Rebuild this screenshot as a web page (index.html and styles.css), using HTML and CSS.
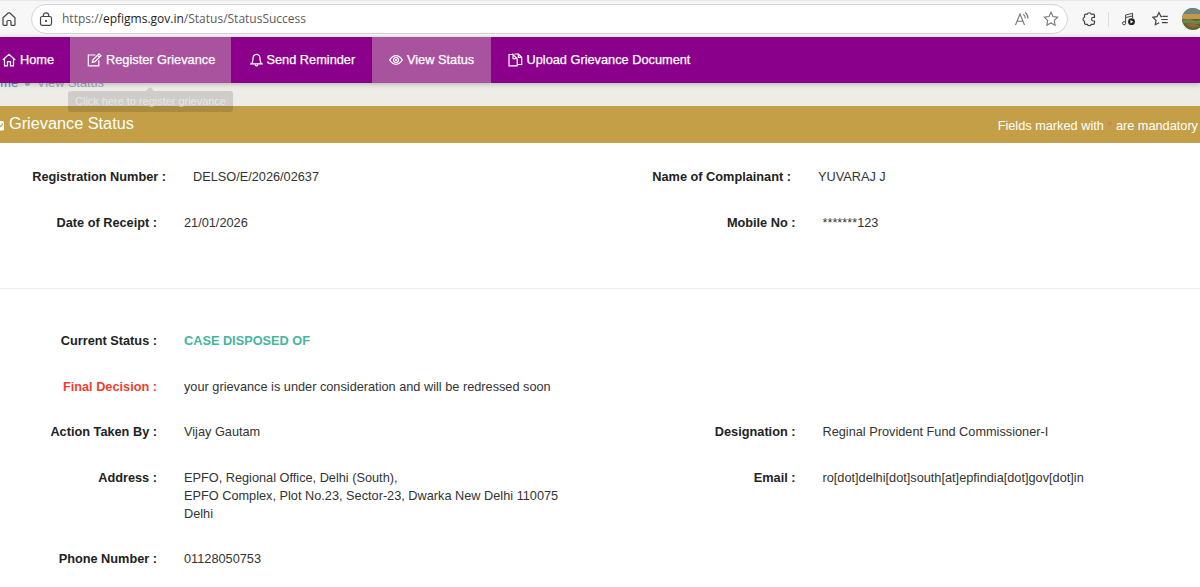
FILE: index.html
```html
<!DOCTYPE html>
<html lang="en">
<head>
	<meta charset="utf-8">
	<title>Grievance Status</title>
	<link rel="stylesheet" href="styles.css">
</head>
<body>

	<!-- Browser toolbar -->
	<div class="toolbar">
		<svg class="tool-home" width="16" height="16" viewBox="0 0 16 16"><path d="M2 6.8 L7.2 2 Q8 1.3 8.8 2 L14 6.8 V13.5 Q14 14.4 13.1 14.4 H10.7 Q10 14.4 10 13.7 V10.5 Q10 9.5 9 9.5 H7 Q6 9.5 6 10.5 V13.7 Q6 14.4 5.3 14.4 H2.9 Q2 14.4 2 13.5 Z"/></svg>
		<div class="address-bar">
			<svg class="lock" width="14" height="15" viewBox="0 0 14 15"><rect x="1.5" y="4.5" width="11" height="8.8" rx="1.8"/><path d="M4.3 4.5 V3.6 a2.7 2.7 0 0 1 5.4 0 V4.5"/><circle class="dot" cx="7" cy="9" r="1"/></svg>
			<span class="url">https://<b>epfigms.gov.in</b>/Status/StatusSuccess</span>
			<svg class="read" width="16" height="16" viewBox="0 0 16 16"><path d="M1.5 14 L6 3 L10.5 14 M3 10.3 H9 M9.3 3.2 Q11.3 4.6 11.3 7.5 M11.2 1.5 Q14 3.6 14 7.5"/></svg>
			<svg class="star" width="16" height="16" viewBox="0 0 16 16"><path d="M8 1.3 L10 5.6 L14.7 6.2 L11.3 9.4 L12.1 14.2 L8 11.9 L3.9 14.2 L4.7 9.4 L1.3 6.2 L6 5.6 Z"/></svg>
		</div>
		<svg class="puzzle" width="16" height="16" viewBox="0 0 16 16"><path d="M4.8 3.2 H6.3 A2.1 2.1 0 0 1 10.3 3.2 H12.2 Q13.5 3.2 13.5 4.5 V6.4 H12.4 A1.8 1.8 0 0 0 12.4 10 H13.5 V12 Q13.5 13.3 12.2 13.3 H10.3 A2.1 2.1 0 0 1 6.3 13.3 H4.8 Q3.5 13.3 3.5 12 V10.2 A2.1 2.1 0 0 1 3.5 6.2 V4.5 Q3.5 3.2 4.8 3.2 Z"/></svg>
		<span class="separator"></span>
		<svg class="music" width="16" height="16" viewBox="0 0 16 16"><path d="M4.6 12 V4 L11.6 2.3 V7 M4.6 6.6 L11.6 4.9"/><circle cx="3.1" cy="12.2" r="1.6"/><circle class="disc" cx="10.5" cy="10.7" r="3.4"/><path class="play" d="M9.5 9 L12.2 10.7 L9.5 12.4 Z"/></svg>
		<svg class="favorites" width="17" height="16" viewBox="0 0 17 16"><path d="M10 5.6 L9 5.6 L7 1.6 L5 5.6 L1 6.3 L4 9.4 L3.3 13.8 L7.2 11.8 M10.3 5.3 H15.8 M9.2 8.5 H15.8 M9.9 11.7 H15.8"/></svg>
		<svg class="avatar" width="22" height="22" viewBox="0 0 22 22">
			<defs><clipPath id="round"><circle cx="11" cy="11" r="11"/></clipPath></defs>
			<g clip-path="url(#round)">
				<rect width="22" height="22" fill="#52652f"/>
				<rect width="22" height="6" fill="#6c8580"/>
				<rect y="6" width="22" height="5" fill="#c5974c"/>
				<path d="M0 12 L7 11 L14 13 L22 11 V15 L12 16 L0 15Z" fill="#6d8746"/>
				<path d="M3 17 L10 15 L18 18 L11 20Z" fill="#9a6537"/>
			</g>
		</svg>
	</div>

	<!-- Main menu -->
	<div class="menu">
		<a class="item home"><svg width="14" height="14" viewBox="0 0 14 14"><path d="M.8 7 L7 1.2 L13.2 7 M2.5 5.6 V12.8 H5.5 V8.7 H8.5 V12.8 H11.5 V5.6"/></svg>Home</a>
		<a class="item register active"><svg width="15" height="14" viewBox="0 0 15 14"><path d="M8.5 2 H1.3 V12.8 H11.8 V7.3 M5.3 9.3 L6 6.7 L12 .9 L14 2.8 L8 8.6 Z M10.6 2.3 L12.5 4.2"/></svg>Register Grievance</a>
		<a class="item reminder"><svg width="13" height="14" viewBox="0 0 13 14"><path d="M1 10.8 Q3 9.6 3 5.2 A3.5 3.8 0 0 1 10 5.2 Q10 9.6 12 10.8 Z M5.2 11.2 Q5.2 12.8 6.5 12.8 Q7.8 12.8 7.8 11.2"/></svg>Send Reminder</a>
		<a class="item view active"><svg width="14" height="14" viewBox="0 0 14 14"><path d="M.7 7 Q3.4 2.7 7 2.7 Q10.6 2.7 13.3 7 Q10.6 11.3 7 11.3 Q3.4 11.3 .7 7 Z"/><circle cx="7" cy="7" r="2.5"/><circle cx="7" cy="7" r=".5"/></svg>View Status</a>
		<a class="item upload"><svg width="15" height="14" viewBox="0 0 15 14"><path d="M5 1.5 H1 V12.8 H9.2 V5.7 L5 1.5 V5.7 H9.2 M6.5 1 H10.5 L13.7 4.2 V11.5 H9.2 M10.3 1 V4.4 H13.7"/></svg>Upload Grievance Document</a>
	</div>

	<div class="breadcrumb">
		<div class="crumbs"><span class="crumb-home">Home</span><span class="bullet"></span><span>View Status</span></div>
		<div class="tooltip">Click here to register grievance</div>
	</div>

	<div class="caption">
		<div class="caption-title"><svg width="5" height="10" viewBox="0 0 5 10"><path class="box" d="M0 0 H2.5 Q4 0 4 1.5 V8 Q4 9.5 2.5 9.5 H0Z"/><path class="check" d="M0 6 L3 2.7"/></svg>Grievance Status</div>
		<div class="mandatory">Fields marked with <span class="required">*</span> are mandatory</div>
	</div>

	<div class="section complainant">
		<div class="row top">
			<div class="label">Registration Number :</div>
			<div class="value">DELSO/E/2026/02637</div>
			<div class="label">Name of Complainant :</div>
			<div class="value">YUVARAJ J</div>
		</div>
		<div class="row">
			<div class="label">Date of Receipt :</div>
			<div class="value">21/01/2026</div>
			<div class="label">Mobile No :</div>
			<div class="value">*******123</div>
		</div>
	</div>

	<div class="section">
		<div class="row">
			<div class="label">Current Status :</div>
			<div class="value disposed">CASE DISPOSED OF</div>
		</div>
		<div class="row">
			<div class="label decision">Final Decision :</div>
			<div class="value">your grievance is under consideration and will be redressed soon</div>
		</div>
		<div class="row">
			<div class="label">Action Taken By :</div>
			<div class="value">Vijay Gautam</div>
			<div class="label">Designation :</div>
			<div class="value">Reginal Provident Fund Commissioner-I</div>
		</div>
		<div class="row">
			<div class="label">Address :</div>
			<div class="value">EPFO, Regional Office, Delhi (South),<br>EPFO Complex, Plot No.23, Sector-23, Dwarka New Delhi 110075<br>Delhi</div>
			<div class="label">Email :</div>
			<div class="value">ro[dot]delhi[dot]south[at]epfindia[dot]gov[dot]in</div>
		</div>
		<div class="row">
			<div class="label">Phone Number :</div>
			<div class="value">01128050753</div>
		</div>
	</div>

</body>
</html>
```

FILE: styles.css
```css
* {
	box-sizing: border-box;
}
body {
	margin: 0;
	height: 587px;
	overflow: hidden;
	background-color: #fff;
	font-family: "Liberation Sans", Arial, sans-serif;
	font-size: 12.74px;
	line-height: 18.2px;
	color: #333;
}
svg {
	flex: none;
	fill: none;
	stroke: #444;
	stroke-width: 1.2;
}

/* browser toolbar */
.toolbar {
	display: flex;
	align-items: center;
	height: 37px;
	padding-left: 1px;
	background-color: #f7f7f7;
	border-top: 1px solid #e8e8e8;
	overflow: hidden;
}
.address-bar {
	display: flex;
	flex: none;
	align-items: center;
	width: 1037px;
	height: 30px;
	margin-left: 14px;
	padding-left: 7px;
	background-color: #fff;
	border: 1px solid #d4d4d4;
	border-radius: 15px;
}
.url {
	width: 952px;
	margin-left: 9px;
	font-family: "Open Sans", "Noto Sans", sans-serif;
	font-size: 12px;
	color: #5c5c5c;
	white-space: nowrap;
}
.url b {
	font-weight: normal;
	color: #222;
}
.read, .star {
	stroke: #777;
	stroke-width: 1.1;
}
.star {
	margin-left: 13px;
}
.dot, .disc {
	fill: #222;
	stroke: none;
}
.play {
	fill: #fff;
	stroke: none;
}
.puzzle {
	margin-left: 13px;
}
.separator {
	flex: none;
	width: 1px;
	height: 15px;
	margin-left: 11px;
	background-color: #ddd;
}
.music {
	margin-left: 12px;
	stroke-width: 1;
}
.favorites {
	margin-left: 15px;
}
.avatar {
	margin-left: 13px;
	stroke: none;
}

/* menu */
.menu {
	display: flex;
	position: relative;
	z-index: 1;
	height: 46px;
	background-color: #8b008b;
	box-shadow: 0 1px 5px rgba(0, 0, 0, 0.25);
}
.item {
	display: flex;
	align-items: center;
	gap: 4px;
	color: #fff;
	font-size: 12.78px;
	white-space: nowrap;
	-webkit-text-stroke: 0.25px #fff;
}
.item svg {
	stroke: #fff;
}
.item.active {
	background-color: #a9529d;
}
.item.home {
	width: 70px;
	padding-left: 2px;
}
.item.register {
	width: 161px;
	padding-left: 17px;
}
.item.reminder {
	width: 140.5px;
	padding-left: 18.5px;
}
.item.view {
	width: 119.5px;
	padding-left: 17.5px;
}
.item.upload {
	padding-left: 16.5px;
}

/* breadcrumb, partly under the menu */
.breadcrumb {
	position: relative;
	height: 23px;
	background-color: #edece7;
}
.crumbs {
	display: flex;
	align-items: center;
	gap: 7px;
	margin-left: -16px;
	position: relative;
	top: -9px;
	color: #97a7b9;
}
.crumb-home {
	color: #4a8fc4;
}
.bullet {
	width: 5px;
	height: 5px;
	border-radius: 50%;
	background-color: #a6b4c4;
}
.tooltip {
	position: absolute;
	z-index: 2;
	left: 68px;
	top: 8px;
	width: 165px;
	height: 20.5px;
	border-radius: 3px;
	background-color: rgba(0, 0, 0, 0.13);
	color: rgba(255, 255, 255, 0.55);
	font-size: 10.95px;
	line-height: 21px;
	text-align: center;
	white-space: nowrap;
}
.tooltip::before {
	content: "";
	position: absolute;
	left: 78px;
	top: -4px;
	border-left: 4px solid transparent;
	border-right: 4px solid transparent;
	border-bottom: 4px solid rgba(0, 0, 0, 0.13);
}

/* caption bar */
.caption {
	display: flex;
	justify-content: space-between;
	height: 37px;
	padding-right: 2px;
	background-color: #c49f47;
	color: #fff;
}
.caption-title {
	display: flex;
	align-items: center;
	gap: 4px;
	height: 35px;
	font-size: 16.3px;
}
.caption svg {
	margin-top: 4px;
	stroke: none;
}
.caption .box {
	fill: #fff;
}
.caption .check {
	stroke: #c49f47;
}
.mandatory {
	padding-top: 10.5px;
}
.required {
	color: #f0696b;
}

/* details */
.section {
	padding-top: 43.4px;
}
.complainant {
	height: 146px;
	padding-top: 25.2px;
	border-bottom: 1px solid #eee;
}
.row {
	display: grid;
	grid-template-columns: 157px 454px 184.5px 404.5px;
	margin-bottom: 27.2px;
}
.row.top {
	grid-template-columns: 166px 454px 171px 409px;
}
.label {
	font-weight: bold;
	text-align: right;
	color: #222;
}
.value {
	padding-left: 27px;
	white-space: nowrap;
}
.disposed {
	font-weight: bold;
	color: #45b6a0;
}
.decision {
	color: #f03e2e;
}
```
